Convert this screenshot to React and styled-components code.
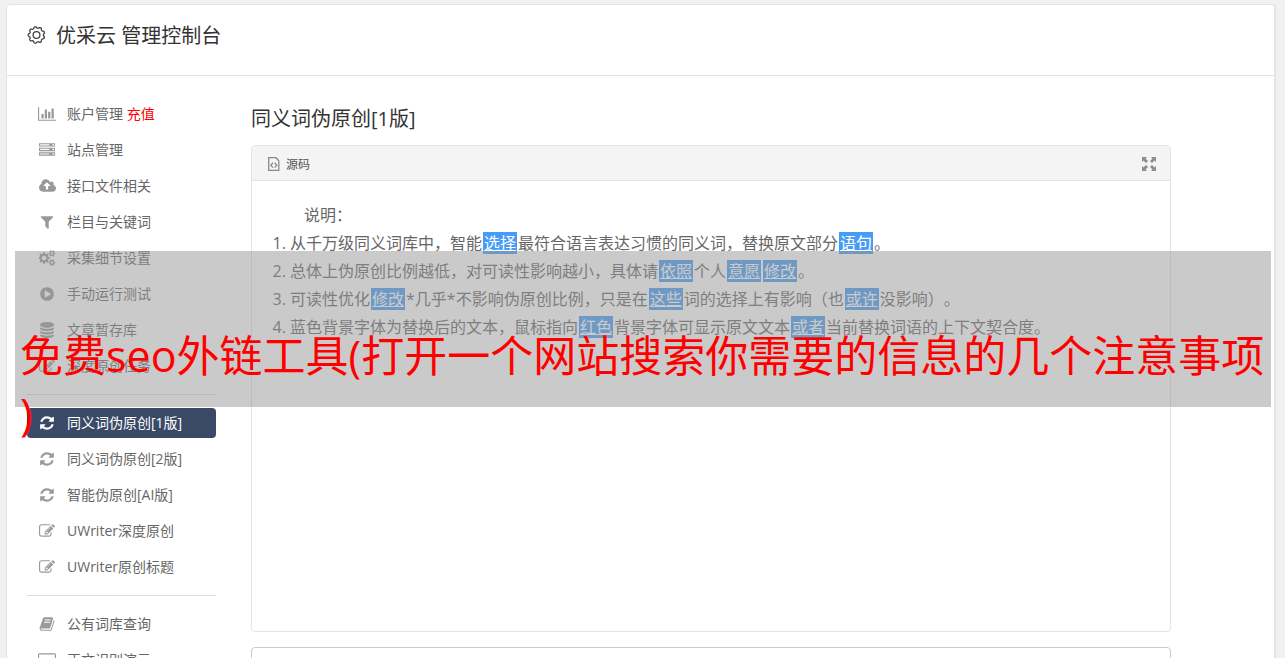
import styled, { createGlobalStyle } from "styled-components";

const GlobalStyle = createGlobalStyle`
  * {
    box-sizing: border-box;
  }
  body {
    margin: 0;
    background: #f1f1f1;
    color: #666;
    font-family: "Open Sans", "Noto Sans", "Noto Sans CJK SC", sans-serif;
    font-size: 14px;
    text-spacing-trim: space-all;
  }
`;

const cogSmall =
  "v140q0 16-149 31-12 27-30 52 51 113 51 138 0 4-4 7-122 71-124 71-8 0-46-47t-52-68q-20 2-30 2t-30-2q-14 21-52 68t-46 47q-2 0-124-71-4-3-4-7 0-25 51-138-18-25-30-52-149-15-149-31v-140q0-16 149-31 13-29 30-52-51-113-51-138 0-4 4-7 4-2 35-20t59-34 30-16q8 0 46 46.5t52 67.5q20-2 30-2t30 2q51-71 92-112l6-2q4 0 124 70 4 3 4 7 0 25-51 138 17 23 30 52 149 15 149 31z";

// w = ancho del viewBox, la altura siempre es 1792
const icons = {
  chart: {
    w: 2048,
    d: "M640 896v512h-256v-512h256zm384-512v1024h-256v-1024h256zm1024 1152v128h-2048v-1536h128v1408h1920zm-640-896v768h-256v-768h256zm384-384v1152h-256v-1152h256z",
  },
  server: {
    w: 1792,
    d: "M128 1408h1024v-128h-1024v128zm0-512h1024v-128h-1024v128zm1568 448q0-40-28-68t-68-28-68 28-28 68 28 68 68 28 68-28 28-68zm-1568-960h1024v-128h-1024v128zm1568 448q0-40-28-68t-68-28-68 28-28 68 28 68 68 28 68-28 28-68zm0-512q0-40-28-68t-68-28-68 28-28 68 28 68 68 28 68-28 28-68zm96 832v384h-1792v-384h1792zm0-512v384h-1792v-384h1792zm0-512v384h-1792v-384h1792z",
  },
  cloud: {
    w: 1920,
    d: "M1280 864q0-14-9-23l-352-352q-9-9-23-9t-23 9l-351 351q-10 12-10 24 0 14 9 23t23 9h224v352q0 13 9.5 22.5t22.5 9.5h192q13 0 22.5-9.5t9.5-22.5v-352h224q13 0 22.5-9.5t9.5-22.5zm640 288q0 159-112.5 271.5t-271.5 112.5h-1088q-185 0-316.5-131.5t-131.5-316.5q0-130 70-240t188-165q-2-30-2-43 0-212 150-362t362-150q156 0 285.5 87t188.5 231q71-62 166-62 106 0 181 75t75 181q0 76-41 138 130 31 213.5 135.5t83.5 238.5z",
  },
  filter: {
    w: 1792,
    d: "M1595 295q17 41-14 70l-493 493v742q0 42-39 59-13 5-25 5-27 0-45-19l-256-256q-19-19-19-45v-486l-493-493q-31-29-14-70 17-39 59-39h1280q42 0 59 39z",
  },
  cogs: {
    w: 1920,
    d:
      "M832 896q0-106-75-181t-181-75-181 75-75 181 75 181 181 75 181-75 75-181zm768 512q0-52-38-90t-90-38-90 38-38 90q0 53 37.5 90.5t90.5 37.5 90.5-37.5 37.5-90.5zm0-1024q0-52-38-90t-90-38-90 38-38 90q0 53 37.5 90.5t90.5 37.5 90.5-37.5 37.5-90.5zm-384 421v185q0 10-7 19.5t-16 10.5l-155 24q-11 35-32 76 34 48 90 115 7 11 7 20 0 12-7 19-23 30-82.5 89.5t-78.5 59.5q-11 0-21-7l-115-90q-37 19-77 31-11 108-23 155-7 24-30 24h-186q-11 0-20-7.5t-10-17.5l-23-153q-34-10-75-31l-118 89q-7 7-20 7-11 0-21-8-144-133-144-160 0-9 7-19 10-14 41-53t47-61q-23-44-35-82l-152-24q-10-1-17-9.5t-7-19.5v-185q0-10 7-19.5t16-10.5l155-24q11-35 32-76-34-48-90-115-7-11-7-20 0-12 7-20 22-30 82-89t79-59q11 0 21 7l115 90q34-18 77-32 11-108 23-154 7-24 30-24h186q11 0 20 7.5t10 17.5l23 153q34 10 75 31l118-89q8-7 20-7 11 0 21 8 144 133 144 160 0 8-7 19-12 16-42 54t-45 60q23 48 34 82l152 23q10 2 17 10.5t7 19.5z" +
      "M1856 1338" + cogSmall +
      "M1856 314" + cogSmall,
  },
  play: {
    w: 1792,
    d: "M896 128q209 0 385.5 103t279.5 279.5 103 385.5-103 385.5-279.5 279.5-385.5 103-385.5-103-279.5-279.5-103-385.5 103-385.5 279.5-279.5 385.5-103zm384 823q32-18 32-55t-32-55l-544-320q-31-19-64-1-32 19-32 56v640q0 37 32 56 16 8 32 8 17 0 32-9z",
  },
  database: {
    w: 1792,
    d: "M896 768q237 0 443-43t325-127v170q0 69-103 128t-280 93.5-385 34.5-385-34.5-280-93.5-103-128v-170q119 84 325 127t443 43zm0 768q237 0 443-43t325-127v170q0 69-103 128t-280 93.5-385 34.5-385-34.5-280-93.5-103-128v-170q119 84 325 127t443 43zm0-384q237 0 443-43t325-127v170q0 69-103 128t-280 93.5-385 34.5-385-34.5-280-93.5-103-128v-170q119 84 325 127t443 43zm0-1152q208 0 385 34.5t280 93.5 103 128v128q0 69-103 128t-280 93.5-385 34.5-385-34.5-280-93.5-103-128v-128q0-69 103-128t280-93.5 385-34.5z",
  },
  edit: {
    w: 1792,
    d: "M888 1184l116-116-152-152-116 116v56h96v96h56zm440-720q-16-16-33 1l-350 350q-17 17-1 33t33-1l350-350q17-17 1-33zm80 594v190q0 119-84.5 203.5t-203.5 84.5h-832q-119 0-203.5-84.5t-84.5-203.5v-832q0-119 84.5-203.5t203.5-84.5h832q63 0 117 25 15 7 18 23 3 17-9 29l-49 49q-14 14-32 8-23-6-45-6h-832q-66 0-113 47t-47 113v832q0 66 47 113t113 47h832q66 0 113-47t47-113v-126q0-13 9-22l64-64q15-15 35-7t20 29zm-96-738l288 288-672 672h-288v-288zm444 132l-92 92-288-288 92-92q28-28 68-28t68 28l152 152q28 28 28 68t-28 68z",
  },
  refresh: {
    w: 1536,
    d: "M1511 1056q0 5-1 7-64 268-268 434.5t-478 166.5q-146 0-282.5-55t-243.5-157l-129 129q-19 19-45 19t-45-19-19-45v-448q0-26 19-45t45-19h448q26 0 45 19t19 45-19 45l-137 137q71 66 161 102t187 36q134 0 250-65t186-179q11-17 53-117 8-23 30-23h192q13 0 22.5 9.5t9.5 22.5zm25-800v448q0 26-19 45t-45 19h-448q-26 0-45-19t-19-45 19-45l138-138q-148-137-349-137-134 0-250 65t-186 179q-11 17-53 117-8 23-30 23h-199q-13 0-22.5-9.5t-9.5-22.5v-7q65-268 270-434.5t480-166.5q146 0 284 55.5t245 156.5l130-129q19-19 45-19t45 19 19 45z",
  },
  book: {
    w: 1792,
    d: "M1703 478q40 57 18 129l-275 906q-19 64-76.5 107.5t-122.5 43.5h-923q-77 0-148.5-53.5t-99.5-131.5q-24-67-2-127 0-4 3-27t4-37q1-8-3-21.5t-3-19.5q2-11 8-21t16.5-23.5 16.5-23.5q23-38 45-91.5t30-91.5q3-10 .5-30t-.5-28q3-11 17-28t17-23q21-36 42-92t25-90q1-9-2.5-32t.5-28q4-13 22-30.5t22-22.5q19-26 42.5-84.5t27.5-96.5q1-8-3-25.5t-2-26.5q2-8 9-18t18-23 17-21q8-12 16.5-30.5t15-35 16-36 19.5-32 26.5-23.5 36-11.5 47.5 5.5l-1 3q38-9 51-9h761q74 0 114 56t18 130l-274 906q-36 119-71.5 153.5t-128.5 34.5h-869q-27 0-38 15-11 16-1 43 24 70 144 70h923q29 0 56-15.5t35-41.5l300-987q7-22 5-57 38 15 59 43zm-1064 2q-4 13 2 22.5t20 9.5h608q13 0 25.5-9.5t16.5-22.5l21-64q4-13-2-22.5t-20-9.5h-608q-13 0-25.5 9.5t-16.5 22.5zm-83 256q-4 13 2 22.5t20 9.5h608q13 0 25.5-9.5t16.5-22.5l21-64q4-13-2-22.5t-20-9.5h-608q-13 0-25.5 9.5t-16.5 22.5z",
  },
  desktop: {
    w: 2048,
    d: "M160 128h1728q66 0 113 47t47 113v1088q0 66-47 113t-113 47h-1728q-66 0-113-47t-47-113v-1088q0-66 47-113t113-47zm0 128q-32 0-32 32v832q0 32 32 32h1728q32 0 32-32v-832q0-32-32-32z",
  },
};

const menu = [
  [
    { icon: "chart", label: "账户管理", extra: "充值" },
    { icon: "server", label: "站点管理" },
    { icon: "cloud", label: "接口文件相关" },
    { icon: "filter", label: "栏目与关键词" },
    { icon: "cogs", label: "采集细节设置" },
    { icon: "play", label: "手动运行测试" },
    { icon: "database", label: "文章暂存库" },
    { icon: "edit", label: "深度原创任务" },
  ],
  [
    { icon: "refresh", label: "同义词伪原创[1版]", active: true },
    { icon: "refresh", label: "同义词伪原创[2版]" },
    { icon: "refresh", label: "智能伪原创[AI版]" },
    { icon: "edit", label: "UWriter深度原创" },
    { icon: "edit", label: "UWriter原创标题" },
  ],
  [
    { icon: "book", label: "公有词库查询" },
    { icon: "desktop", label: "正文识别演示" },
  ],
];

function Icon({ name }) {
  const { w, d } = icons[name];
  return (
    <svg width={Math.round(w / 112)} height="16" viewBox={`0 0 ${w} 1792`} fill="currentColor" fillRule="evenodd" aria-hidden="true">
      <path d={d} />
    </svg>
  );
}

// Contorno del engranaje: un circulo con 9 dientes redondeados
const gearPath =
  Array.from({ length: 144 }, (_, i) => {
    const a = (i / 144) * Math.PI * 2;
    const r = 7.6 + 0.7 * Math.tanh(2 * Math.cos(a * 9 + Math.PI / 2));
    return `${i ? "L" : "M"}${(9.5 + r * Math.sin(a)).toFixed(2)} ${(9 - r * Math.cos(a)).toFixed(2)}`;
  }).join("") + "Z";

function Gear() {
  return (
    <svg width="19" height="20" viewBox="0 0 19 20" fill="none" stroke="#444" strokeWidth="1.3" aria-hidden="true">
      <path d={gearPath} />
      <circle cx="9.5" cy="9" r="3.4" />
    </svg>
  );
}

function SourceIcon() {
  return (
    <svg width="12" height="14" viewBox="0 0 12 14" fill="none" stroke="#8a8a8a" aria-hidden="true">
      <path d="M.7.7H8L10.8 3.8V13.3H.7Z" strokeWidth="1.3" />
      <path d="M5 5.8 2.8 8.2 5 10.6M6.6 5.8 8.8 8.2 6.6 10.6" strokeWidth="1.3" />
    </svg>
  );
}

function ExpandIcon() {
  return (
    <svg width="14" height="14" viewBox="0 0 14 14" fill="#8c8c8c" aria-hidden="true">
      <path d="M0 0H5L3.5 1.5 6 4 4 6 1.5 3.5 0 5Z" />
      <path d="M14 0V5L12.500 3.500 10 6 8 4 10.500 1.500 9 0Z" />
      <path d="M0 14V9L1.500 10.500 4 8 6 10 3.500 12.500 5 14Z" />
      <path d="M14 14H9L10.500 12.500 8 10 10 8 12.500 10.500 14 9Z" />
    </svg>
  );
}

export default function App() {
  return (
    <Page>
      <GlobalStyle />
      <Panel>
        <Header>
          <Gear />
          <Title>优采云 管理控制台</Title>
        </Header>

        <Content>
          <Sidebar>
            {menu.map((group, i) => (
              <MenuGroup key={i}>
                {group.map(({ icon, label, extra, active }) => (
                  <li key={label}>
                    <MenuLink href="#" $active={active}>
                      <IconBox>
                        <Icon name={icon} />
                      </IconBox>
                      <span>
                        {label} {extra && <Extra>{extra}</Extra>}
                      </span>
                    </MenuLink>
                  </li>
                ))}
              </MenuGroup>
            ))}
          </Sidebar>

          <Main>
            <Heading>同义词伪原创[1版]</Heading>
            <Editor>
              <Toolbar>
                <ToolButton>
                  <SourceIcon />
                  源码
                </ToolButton>
                <ToolButton aria-label="全屏">
                  <ExpandIcon />
                </ToolButton>
              </Toolbar>
              <EditorBody>
                <Intro>说明：</Intro>
                <Notes>
                  <li>
                    从千万级同义词库中，智能<Word>选择</Word>最符合语言表达习惯的同义词，替换原文部分<Word>语句</Word>。
                  </li>
                  <li>
                    总体上伪原创比例越低，对可读性影响越小，具体请<Word>依照</Word>个人<Word>意愿</Word><Word>修改</Word>。
                  </li>
                  <li>
                    可读性优化<Word>修改</Word>*几乎*不影响伪原创比例，只是在<Word>这些</Word>词的选择上有影响（也<Word>或许</Word>没影响）。
                  </li>
                  <li>
                    蓝色背景字体为替换后的文本，鼠标指向<Word>红色</Word>背景字体可显示原文文本<Word>或者</Word>当前替换词语的上下文契合度。
                  </li>
                </Notes>
              </EditorBody>
            </Editor>
            <Result />
          </Main>
        </Content>
      </Panel>

      <Banner>免费seo外链工具(打开一个网站搜索你需要的信息的几个注意事项)</Banner>
    </Page>
  );
}

const Page = styled.div`
  position: relative;
  height: 100vh;
  overflow: hidden;
  padding: 4px 9px 0 6px;
`;

const Panel = styled.div`
  background: #fff;
  border: 1px solid #e4e4e4;
  border-right-width: 2px;
  border-radius: 4px;
`;

const Header = styled.header`
  display: flex;
  align-items: center;
  gap: 10px;
  padding: 16px 20px 24px;
  border-bottom: 1px solid #e4e4e4;
`;

const Title = styled.h1`
  margin: 0;
  color: #333;
  font-size: 20px;
  font-weight: 400;
  line-height: 30px;
`;

const Content = styled.div`
  display: flex;
  align-items: flex-start;
  gap: 35px;
  padding: 23px 103px 20px 20px;
`;

const Sidebar = styled.nav`
  flex: 0 0 189px;
`;

const MenuGroup = styled.ul`
  display: flex;
  flex-direction: column;
  gap: 6px;
  margin: 0;
  padding: 0;
  list-style: none;

  & + & {
    margin-top: 13px;
    padding-top: 13px;
    border-top: 1px solid #ddd;
  }
`;

const MenuLink = styled.a`
  display: flex;
  align-items: center;
  gap: 10px;
  padding: 0 10px;
  border-radius: 4px;
  background: ${({ $active }) => ($active ? "#3a4a66" : "transparent")};
  color: ${({ $active }) => ($active ? "#fff" : "#666")};
  line-height: 30px;
  text-decoration: none;

  svg {
    color: ${({ $active }) => ($active ? "#fff" : "#999")};
  }
`;

const IconBox = styled.span`
  display: flex;
  justify-content: center;
  width: 20px;
`;

const Extra = styled.span`
  color: #f00;
`;

const Main = styled.main`
  flex: 1;
  min-width: 0;
  padding-top: 5px;
`;

const Heading = styled.h2`
  margin: 0 0 11px;
  color: #333;
  font-size: 20px;
  font-weight: 400;
  line-height: 30px;
`;

const Editor = styled.section`
  border: 1px solid #e4e4e4;
  border-radius: 4px;
  overflow: hidden;
`;

const Toolbar = styled.div`
  display: flex;
  align-items: center;
  justify-content: space-between;
  padding: 3px 14px 1px 16px;
  background: #f4f4f4;
  border-bottom: 1px solid #e4e4e4;
`;

const ToolButton = styled.button`
  display: flex;
  align-items: center;
  gap: 6px;
  height: 30px;
  padding: 0;
  border: 0;
  background: none;
  color: #555;
  font-family: inherit;
  font-size: 12px;
`;

const EditorBody = styled.div`
  min-height: 450px;
  padding: 20px;
  font-size: 16px;
  line-height: 28px;
`;

const Intro = styled.p`
  margin: 0;
  text-indent: 2em;
`;

const Notes = styled.ol`
  margin: 0;
  padding-left: 18px;
`;

const Word = styled.u`
  margin: 0 1px;
  padding: 0 1px;
  background: #469cf5;
  color: #fff;
`;

const Result = styled.section`
  min-height: 80px;
  margin-top: 15px;
  border: 1px solid #ccc;
  border-radius: 4px;
`;

// Franja semitransparente que queda por encima del panel
const Banner = styled.div`
  position: absolute;
  top: 251px;
  left: 15px;
  right: 14px;
  height: 156px;
  padding: 76px 0 0 5px;
  background: rgba(150, 150, 150, 0.5);
  color: #f00;
  font-size: 43px;
  line-height: 58px;
  line-break: anywhere;
`;
